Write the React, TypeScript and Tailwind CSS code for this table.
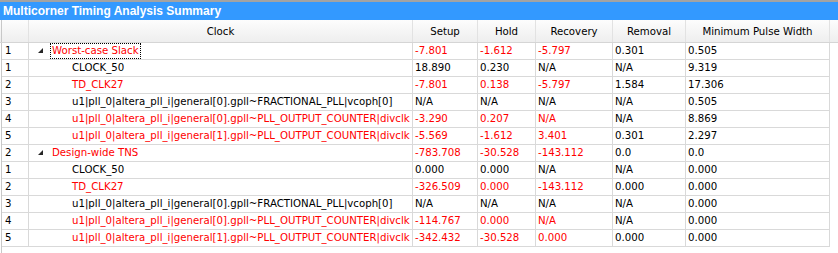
type Row = {
  n: string;
  name: string;
  level: 0 | 1;
  red: boolean;
  focus?: boolean;
  vals: [string, boolean][];
};

const R = true;
const K = false;

const rows: Row[] = [
  { n: '1', name: 'Worst-case Slack', level: 0, red: R, focus: true, vals: [['-7.801', R], ['-1.612', R], ['-5.797', R], ['0.301', K], ['0.505', K]] },
  { n: '1', name: 'CLOCK_50', level: 1, red: K, vals: [['18.890', K], ['0.230', K], ['N/A', K], ['N/A', K], ['9.319', K]] },
  { n: '2', name: 'TD_CLK27', level: 1, red: R, vals: [['-7.801', R], ['0.138', R], ['-5.797', R], ['1.584', K], ['17.306', K]] },
  { n: '3', name: 'u1|pll_0|altera_pll_i|general[0].gpll~FRACTIONAL_PLL|vcoph[0]', level: 1, red: K, vals: [['N/A', K], ['N/A', K], ['N/A', K], ['N/A', K], ['0.505', K]] },
  { n: '4', name: 'u1|pll_0|altera_pll_i|general[0].gpll~PLL_OUTPUT_COUNTER|divclk', level: 1, red: R, vals: [['-3.290', R], ['0.207', R], ['N/A', R], ['N/A', K], ['8.869', K]] },
  { n: '5', name: 'u1|pll_0|altera_pll_i|general[1].gpll~PLL_OUTPUT_COUNTER|divclk', level: 1, red: R, vals: [['-5.569', R], ['-1.612', R], ['3.401', R], ['0.301', K], ['2.297', K]] },
  { n: '2', name: 'Design-wide TNS', level: 0, red: R, vals: [['-783.708', R], ['-30.528', R], ['-143.112', R], ['0.0', K], ['0.0', K]] },
  { n: '1', name: 'CLOCK_50', level: 1, red: K, vals: [['0.000', K], ['0.000', K], ['N/A', K], ['N/A', K], ['0.000', K]] },
  { n: '2', name: 'TD_CLK27', level: 1, red: R, vals: [['-326.509', R], ['0.000', R], ['-143.112', R], ['0.000', K], ['0.000', K]] },
  { n: '3', name: 'u1|pll_0|altera_pll_i|general[0].gpll~FRACTIONAL_PLL|vcoph[0]', level: 1, red: K, vals: [['N/A', K], ['N/A', K], ['N/A', K], ['N/A', K], ['0.000', K]] },
  { n: '4', name: 'u1|pll_0|altera_pll_i|general[0].gpll~PLL_OUTPUT_COUNTER|divclk', level: 1, red: R, vals: [['-114.767', R], ['0.000', R], ['N/A', R], ['N/A', K], ['0.000', K]] },
  { n: '5', name: 'u1|pll_0|altera_pll_i|general[1].gpll~PLL_OUTPUT_COUNTER|divclk', level: 1, red: R, vals: [['-342.432', R], ['-30.528', R], ['0.000', R], ['0.000', K], ['0.000', K]] },
];

const headers = ['Setup', 'Hold', 'Recovery', 'Removal', 'Minimum Pulse Width'];
const widths = ['w-[65px]', 'w-[58px]', 'w-[77px]', 'w-[73px]', 'w-[144px]'];

function Expander() {
  return (
    <svg width="6" height="6" viewBox="0 0 6 6" className="shrink-0">
      <polygon points="5,0 5,5 0,5" fill="#262626" />
    </svg>
  );
}

export default function App() {
  return (
    <div className="w-[838px] h-[253px] bg-white flex flex-col overflow-hidden font-['DejaVu_Sans',Verdana,sans-serif] text-[10.2px] text-black">
      <div className="h-[2px] bg-[#a3a3a3]" />
      <div className="h-[18px] bg-[#3399ff] flex items-center pl-[3px] text-white font-bold text-[12px] font-['Liberation_Sans',Arial,sans-serif]">
        Multicorner Timing Analysis Summary
      </div>

      {/* header */}
      <div className="h-[23px] flex pl-px border-b border-[#d5d5d5] bg-gradient-to-b from-[#fdfdfd] to-[#eeeeee]">
        <div className="flex border-l border-[#c8c8c8]">
          <div className="w-[27px] border-r border-[#e2e2e2]" />
          <div className="w-[384px] border-r border-[#e2e2e2] flex items-center justify-center pt-px">Clock</div>
          {headers.map((h, i) => (
            <div key={h} className={`${widths[i]} border-r border-[#e2e2e2] flex items-center justify-center pt-px`}>
              {h}
            </div>
          ))}
        </div>
        <div className="flex-1" />
      </div>

      {/* body */}
      <div className="flex-1 ml-px border-l border-[#c8c8c8]">
        <div className="w-[828px]">
          {rows.map((r, idx) => (
            <div key={idx} className="h-[17px] flex border-b border-[#d9d9d9] leading-none">
              <div className="w-[27px] border-r border-[#d9d9d9] flex items-center pl-[3px]">{r.n}</div>
              <div className={`w-[384px] border-r border-[#d9d9d9] flex items-center ${r.red ? 'text-[#ff0000]' : ''}`}>
                {r.level === 0 ? (
                  <div className="flex items-center h-full">
                    <div className="w-[9px]" />
                    <Expander />
                    <div className="w-[6px]" />
                    <span className={`h-full flex items-center px-px ${r.focus ? 'border border-dotted border-black' : 'border border-transparent'}`}>
                      {r.name}
                    </span>
                  </div>
                ) : (
                  <span className="pl-[43px]">{r.name}</span>
                )}
              </div>
              {r.vals.map(([v, red], i) => (
                <div key={i} className={`${widths[i]} border-r border-[#d9d9d9] flex items-center pl-[2px] ${red ? 'text-[#ff0000]' : ''}`}>
                  {v}
                </div>
              ))}
            </div>
          ))}
        </div>
      </div>
    </div>
  );
}
